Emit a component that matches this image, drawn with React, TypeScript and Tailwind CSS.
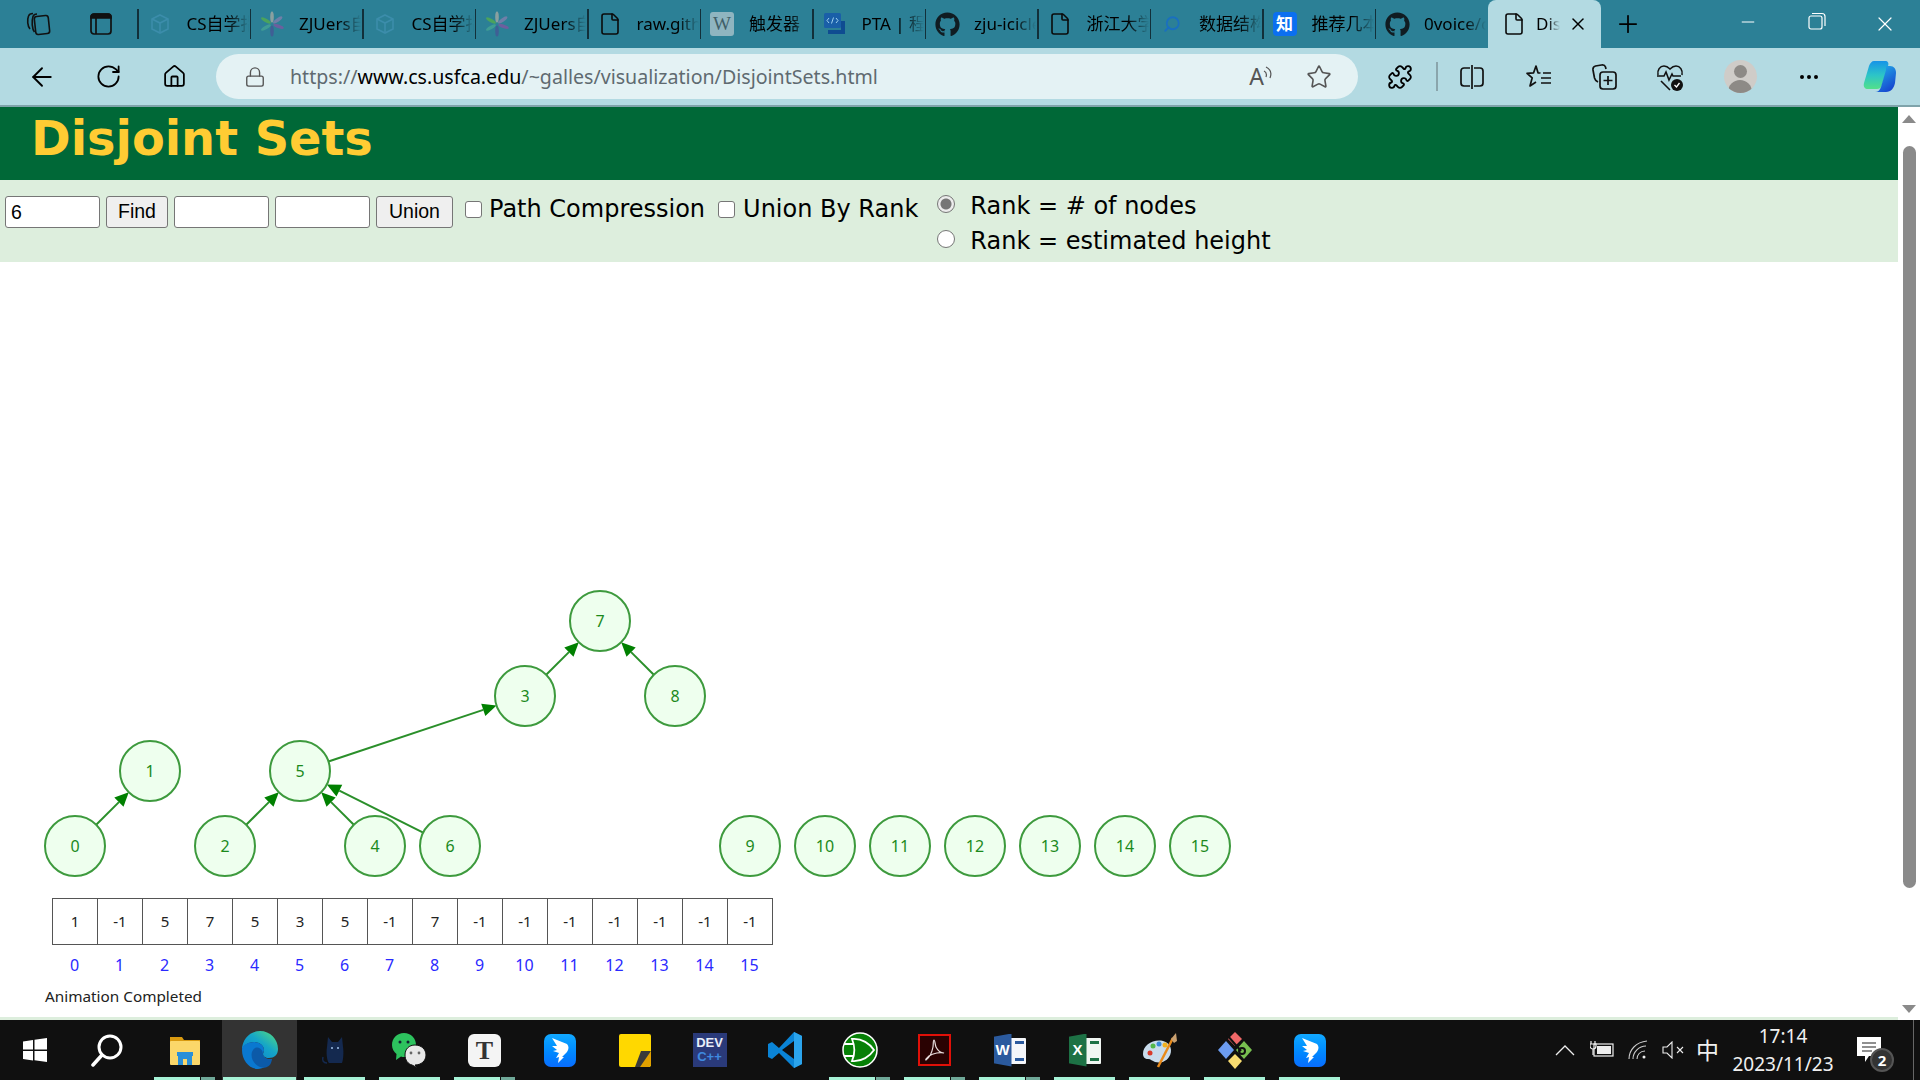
import type { ReactNode } from "react";
import {
  ArrowLeft,
  File,
  Home,
  Lock,
  Minus,
  MoreHorizontal,
  Plus,
  Puzzle,
  RotateCw,
  Search,
  Star,
  X,
} from "lucide-react";
import { FaGithub } from "react-icons/fa";

const Cube = () => (
  <svg width="24" height="24" viewBox="0 0 24 24" fill="none" stroke="#3c8dab" strokeWidth="1.6">
    <path d="M12 3l8 4v10l-8 4-8-4V7z" />
    <path d="M4 7l8 4 8-4M12 11v10" />
  </svg>
);

const Flower = () => (
  <svg width="26" height="26" viewBox="0 0 26 26">
    {[
      [0, "#8aa0a0"],
      [55, "#6f7fa8"],
      [110, "#6c5f9e"],
      [180, "#3f5f95"],
      [240, "#3f9c94"],
      [300, "#4ba35c"],
    ].map(([angle, color]) => (
      <ellipse
        key={angle}
        cx="13"
        cy="6"
        rx="1.8"
        ry="5.5"
        fill={color as string}
        transform={`rotate(${angle} 13 13)`}
      />
    ))}
  </svg>
);

const PtaIcon = () => (
  <svg width="24" height="24" viewBox="0 0 24 24">
    <rect x="1" y="1" width="17" height="15" rx="1.5" fill="#1a5fa8" />
    <path d="M5 22h17V9h-4v9H5z" fill="#0f4c91" />
    <path d="M6 6L4 8.5 6 11M13 6l2 2.5-2 2.5M10.5 5.5l-2 6" stroke="#9fd0ef" strokeWidth="1" fill="none" />
  </svg>
);

const tabs: { label: string; icon: ReactNode }[] = [
  { label: "CS自学指南", icon: <Cube /> },
  { label: "ZJUers自学", icon: <Flower /> },
  { label: "CS自学指南", icon: <Cube /> },
  { label: "ZJUers自学", icon: <Flower /> },
  { label: "raw.githubuser", icon: <File size={24} strokeWidth={1.6} color="#0b0b0b" /> },
  {
    label: "触发器",
    icon: (
      <span className="flex h-6 w-6 items-center justify-center rounded-[3px] bg-[#8fb5c0] font-['Liberation_Serif',serif] text-[19px] text-[#3f5f68]">
        W
      </span>
    ),
  },
  { label: "PTA | 程序", icon: <PtaIcon /> },
  { label: "zju-icicles", icon: <FaGithub size={25} color="#101c22" /> },
  { label: "浙江大学", icon: <File size={24} strokeWidth={1.6} color="#0b0b0b" /> },
  { label: "数据结构", icon: <Search size={18} strokeWidth={2.4} color="#1a6fc0" className="-scale-x-100" /> },
  {
    label: "推荐几本",
    icon: (
      <span className="flex h-6 w-6 items-center justify-center rounded-[4px] bg-[#0b6ff0] text-[17px] font-bold text-white">
        知
      </span>
    ),
  },
  { label: "0voice/cpp", icon: <FaGithub size={25} color="#101c22" /> },
];

const CollectionsIcon = () => (
  <svg width="26" height="26" viewBox="0 0 26 26" fill="none" stroke="#111" strokeWidth="1.6">
    <rect x="10" y="5" width="14" height="18" rx="2.5" transform="rotate(-6 17 14)" />
    <path d="M9.5 21C7 18 6.5 10 8 5.5c.5-1.5 2-2.5 4-2.5" />
    <path d="M5 18C2.5 15 2 9 3.5 5 4 3.5 5.5 2.5 8 2.5" />
  </svg>
);

const TabActionsIcon = () => (
  <svg width="24" height="26" viewBox="0 0 24 26" fill="none" stroke="#111" strokeWidth="1.7">
    <rect x="2" y="3" width="20" height="20" rx="3" />
    <path d="M2 7V6a3 3 0 013-3h14a3 3 0 013 3v1z" fill="#111" />
    <path d="M7 7v16" />
  </svg>
);

const ReadAloud = () => (
  <span className="flex items-start text-[#555]">
    <span className="text-[23px] leading-none">A</span>
    <svg width="10" height="16" viewBox="0 0 10 16" fill="none" stroke="#555" strokeWidth="1.2" className="-ml-[1px]">
      <path d="M1 6c2 1 3 3 2 6M3 2c4 2 6 6 4 11" />
    </svg>
  </span>
);

const SplitIcon = () => (
  <svg width="26" height="26" viewBox="0 0 26 26" fill="none" stroke="#111" strokeWidth="1.7">
    <path d="M11 4H5a3 3 0 00-3 3v12a3 3 0 003 3h6M15 4h6a3 3 0 013 3v12a3 3 0 01-3 3h-6" />
    <path d="M13 1v24" />
  </svg>
);

const FavoritesIcon = () => (
  <svg width="26" height="26" viewBox="0 0 26 26" fill="none" stroke="#111" strokeWidth="1.7" strokeLinejoin="round">
    <path d="M14.500 9l-2.500-.2L10 2 7.600 8.800 1 9.300l5.200 4.500L4 22l6-4" />
    <path d="M17 9h8M15 14h10M15 19h10" />
  </svg>
);

const AddCollectionIcon = () => (
  <svg width="28" height="28" viewBox="0 0 28 28" fill="none" stroke="#111" strokeWidth="1.7">
    <path d="M7 19c-2-1-3-2-3.500-4L2 7c-.3-2 .7-3.500 2.500-4l6-1c2-.3 3.500.5 4 2l.5 2" />
    <rect x="9" y="9" width="16" height="17" rx="3" />
    <path d="M17 13v9M12.500 17.500h9" />
  </svg>
);

const HealthIcon = () => (
  <svg width="30" height="30" viewBox="0 0 30 30" fill="none" stroke="#111" strokeWidth="1.6">
    <path d="M2 13c-1-5 2-9 6-9 3 0 5 2 6 3 1-1 3-3 6-3 4 0 7 4 6 9" />
    <path d="M1 14h7l2-4 3 8 3-6 1 2h8" />
    <path d="M5 19l9 9" />
    <circle cx="21" cy="23" r="6" fill="#111" stroke="none" />
    <path d="M18.500 23l2 2 3-4" stroke="#fff" strokeWidth="1.3" />
  </svg>
);

const CopilotIcon = () => (
  <svg width="36" height="38" viewBox="0 0 36 36">
    <defs>
      <linearGradient id="copA" x1="0" y1="0" x2="0" y2="1">
        <stop offset="0" stopColor="#1693e8" />
        <stop offset="0.5" stopColor="#2cc4c8" />
        <stop offset="1" stopColor="#52e08a" />
      </linearGradient>
      <linearGradient id="copB" x1="0" y1="0" x2="0.6" y2="1">
        <stop offset="0" stopColor="#22b8ea" />
        <stop offset="1" stopColor="#1748d0" />
      </linearGradient>
    </defs>
    <path d="M12 2h11c3 0 4 2 3 5l-6 19c-1 3-3 4-5 4H6c-3 0-5-2-4-6l5-17c1-3 3-5 5-5z" fill="url(#copA)" />
    <path d="M24 7h4c4 0 6 3 6 7l-1 10c-1 5-4 9-9 9H13c3 0 5-2 6-5l5-17z" fill="url(#copB)" />
  </svg>
);

const WindowsLogo = () => (
  <svg width="26" height="26" viewBox="0 0 26 26" fill="#fff">
    <path d="M1 4.500l10-1.500v9.500H1zM12.500 2.700L25 1v11.500H12.500zM1 14h10v9.500L1 22zM12.500 14H25v11l-12.500-1.700z" />
  </svg>
);

const SearchLogo = () => (
  <svg width="34" height="34" viewBox="0 0 34 34" fill="none" stroke="#fff" className="-translate-x-[3px]">
    <circle cx="20" cy="14" r="11" strokeWidth="3" />
    <path d="M12 22L3 32" strokeWidth="3.500" strokeLinecap="round" />
  </svg>
);

const ExplorerLogo = () => (
  <svg width="34" height="30" viewBox="0 0 34 30">
    <path d="M2 2h12l2 3h16v6H2z" fill="#d99a10" />
    <rect x="2" y="6" width="30" height="24" rx="1" fill="#fbd76a" />
    <path d="M9 17h16v4h-1v9h-5v-6h-4v6h-5v-9H9z" fill="#2a8fd8" />
  </svg>
);

const EdgeLogo = () => (
  <svg width="38" height="40" viewBox="0 0 38 40">
    <defs>
      <linearGradient id="edgeTop" x1="0" y1="1" x2="1" y2="0">
        <stop offset="0" stopColor="#0b7fd0" />
        <stop offset="0.55" stopColor="#15a5c8" />
        <stop offset="1" stopColor="#57e07c" />
      </linearGradient>
    </defs>
    <path d="M19 1c10 0 18 8 18 18 0 6-4 9-9 9-4 0-6-2-6-4 0-1 1-2 1-4 0-4-4-8-10-8C7 12 2 16 1 20 1 9 9 1 19 1z" fill="url(#edgeTop)" />
    <path d="M1 20c0-5 6-8 12-8 5 0 10 3 10 8 0 1-1 3-1 4 0 3 3 6 9 5-3 6-9 10-14 10C8 39 1 30 1 20z" fill="#0a78d0" />
    <path d="M14 18c-5 3-5 13 3 18 3 2 7 2 9 1 2-1 4-2 5-8-6 1-9-2-9-5 0-3-3-8-8-6z" fill="#0c5aa8" />
  </svg>
);

const CatLogo = () => (
  <svg width="30" height="30" viewBox="0 0 30 30">
    <path d="M8 2l4 5h6l4-5 1 10c1 6 0 14-1 16H9C7 26 6 18 7 12z" fill="#14294f" />
    <path d="M7 28C3 28 2 25 3 22" fill="none" stroke="#14294f" strokeWidth="1.500" />
    <circle cx="12" cy="13" r="1" fill="#9fc0e8" />
    <circle cx="18" cy="13" r="1" fill="#9fc0e8" />
  </svg>
);

const WechatLogo = () => (
  <svg width="38" height="36" viewBox="0 0 38 36">
    <path d="M1 13C1 6 6 1 13 1s12 5 12 12-5 12-12 12c-1 0-2 0-3-.5L5 28l.5-6C3 20 1 17 1 13z" fill="#2dc25e" />
    <circle cx="9" cy="10" r="1.500" fill="#123" />
    <circle cx="17" cy="10" r="1.500" fill="#123" />
    <path d="M14 23c0-6 4-10 10-10s11 4 11 10-5 10-11 10l3 3-6-3c-4-1-7-5-7-10z" fill="#e8e8e8" stroke="#101010" strokeWidth="1" />
    <circle cx="20" cy="21" r="1.400" fill="#666" />
    <circle cx="28" cy="21" r="1.400" fill="#666" />
  </svg>
);

const DingLogo = () => (
  <span className="flex h-[33px] w-[32px] items-center justify-center rounded-[7px] bg-gradient-to-b from-[#12a8ff] to-[#0a6cff]">
    <svg width="22" height="26" viewBox="0 0 22 26" fill="#fff">
      <path d="M3 1l15 6c2 2 2 5 0 8l-5 5 2 0-6 6 1-6-3 1 3-5-6-2 4-1-5-4 5 0z" />
    </svg>
  </span>
);

const StickyLogo = () => (
  <span className="relative block h-[33px] w-[32px] rounded-[2px] bg-[#ffd800]">
    <svg width="16" height="16" viewBox="0 0 16 16" className="absolute bottom-0 right-0">
      <path d="M16 0H6L0 16h10z" fill="#3a3a3a" />
      <path d="M16 0v14l-2 2H5z" fill="#e2a100" />
    </svg>
  </span>
);

const VscodeLogo = () => (
  <svg width="36" height="38" viewBox="0 0 36 38">
    <path d="M27 1l8 4v28l-8 4-15-15-7 6-4-2V13l4-2 7 6z" fill="#0a84d6" />
    <path d="M27 10L15 19l12 9z" fill="#101010" />
    <path d="M27 1l8 4v28l-8 4z" fill="#2ba4ec" />
  </svg>
);

const LogisimLogo = () => (
  <svg width="36" height="36" viewBox="0 0 36 36">
    <circle cx="18" cy="18" r="17" fill="#068006" stroke="#fff" strokeWidth="1.500" />
    <path d="M10 7c10-1 18 5 22 11-4 6-12 12-22 11 3-7 3-15 0-22zM2 12h10M2 24h10" fill="none" stroke="#fff" strokeWidth="1.800" />
  </svg>
);

const AcrobatLogo = () => (
  <span className="flex h-[32px] w-[33px] items-center justify-center border-2 border-[#e01008] bg-[#2a0202]">
    <svg width="22" height="24" viewBox="0 0 22 24" fill="none" stroke="#e8dcdc" strokeWidth="1.200">
      <path d="M2 22c3-2 6-8 7-13 .5-3 0-7 1-7s1 5 2 7c2 4 5 6 8 6-3-1-11 0-15 3-2 2-4 4-3 4z" />
    </svg>
  </span>
);

const OfficeLogo = ({ letter, dark, light, rule }: { letter: string; dark: string; light: string; rule: string }) => (
  <span className="relative block h-[33px] w-[32px]">
    <span className={`absolute right-0 top-[4px] h-[26px] w-[20px] rounded-[1px] ${light}`}>
      <span className={`ml-[9px] mt-[3px] block h-[20px] w-[9px] border-y-[3px] ${rule}`} />
    </span>
    <span
      className={`absolute left-0 top-0 flex h-[33px] w-[18px] items-center justify-center font-['Liberation_Sans',sans-serif] text-[15px] font-bold text-white [clip-path:polygon(0_10%,100%_0,100%_100%,0_90%)] ${dark}`}
    >
      {letter}
    </span>
  </span>
);

const PaintLogo = () => (
  <svg width="38" height="36" viewBox="0 0 38 36">
    <path d="M2 22C2 13 12 7 22 9c8 2 10 10 6 16-4 6-10 6-14 5-3-1-4-3-7-3-3 0-5-2-5-5z" fill="#c9dcec" />
    <circle cx="9" cy="21" r="2.500" fill="#d83a2a" />
    <circle cx="12" cy="14" r="2.500" fill="#54b84a" />
    <circle cx="18" cy="12" r="2.500" fill="#3a8ad8" />
    <circle cx="24" cy="13" r="2.500" fill="#f0b020" />
    <path d="M32 6L17 35" stroke="#e88a1a" strokeWidth="2.500" />
    <path d="M30 7l5-6 1 8-3 2z" fill="#c9a070" />
  </svg>
);

const GitLogo = () => (
  <svg width="36" height="38" viewBox="0 0 36 38">
    <path d="M18 9l-9 9 9 9 9-9z" fill="#101010" />
    <path d="M9 10l-8 9 8 9 8-9z" fill="#6c9cf0" />
    <path d="M27 10l-8 9 8 9 8-9z" fill="#78c050" />
    <path d="M18 1l-7 7 7 7 7-7z" fill="#f06868" />
    <path d="M18 23l-7 7 7 8 7-8z" fill="#f8dc70" />
    <path d="M10 4l14 16" stroke="#101010" strokeWidth="2" />
    <circle cx="25" cy="20" r="3" fill="none" stroke="#101010" strokeWidth="2" />
  </svg>
);

type TaskItem = { icon: ReactNode; bar?: boolean; stacked?: boolean; active?: boolean };

const taskItems: TaskItem[] = [
  { icon: <WindowsLogo /> },
  { icon: <SearchLogo /> },
  { icon: <ExplorerLogo />, bar: true, stacked: true },
  { icon: <EdgeLogo />, bar: true, active: true },
  { icon: <CatLogo />, bar: true },
  { icon: <WechatLogo />, bar: true },
  {
    icon: (
      <span className="flex h-[33px] w-[33px] items-center justify-center rounded-[6px] bg-[#f4f4f4] font-['Liberation_Serif',serif] text-[26px] font-bold text-[#333]">
        T
      </span>
    ),
    bar: true,
    stacked: true,
  },
  { icon: <DingLogo /> },
  { icon: <StickyLogo /> },
  {
    icon: (
      <span className="flex h-[34px] w-[34px] flex-col items-center justify-center bg-[#2a3a7a] font-['Liberation_Sans',sans-serif] text-[13px] font-bold leading-[14px]">
        <span className="text-[#e8eef8]">DEV</span>
        <span className="text-[#3f8ae0]">C++</span>
      </span>
    ),
  },
  { icon: <VscodeLogo /> },
  { icon: <LogisimLogo />, bar: true, stacked: true },
  { icon: <AcrobatLogo />, bar: true, stacked: true },
  {
    icon: <OfficeLogo letter="W" dark="bg-[#2b5a9e]" light="bg-[#f4f6fa]" rule="border-[#2b5a9e]" />,
    bar: true,
    stacked: true,
  },
  {
    icon: <OfficeLogo letter="X" dark="bg-[#1d7145]" light="bg-[#f0f6f2]" rule="border-[#1d7145]" />,
    bar: true,
  },
  { icon: <PaintLogo />, bar: true },
  { icon: <GitLogo />, bar: true },
  { icon: <DingLogo />, bar: true },
];

const nodes: [number, number, number][] = [
  [0, 75, 846],
  [1, 150, 771],
  [2, 225, 846],
  [3, 525, 696],
  [4, 375, 846],
  [5, 300, 771],
  [6, 450, 846],
  [7, 600, 621],
  [8, 675, 696],
  [9, 750, 846],
  [10, 825, 846],
  [11, 900, 846],
  [12, 975, 846],
  [13, 1050, 846],
  [14, 1125, 846],
  [15, 1200, 846],
];

const parents = [1, -1, 5, 7, 5, 3, 5, -1, 7, -1, -1, -1, -1, -1, -1, -1];

const Edge = ({ from, to }: { from: number; to: number }) => {
  const [, x1, y1] = nodes[from];
  const [, x2, y2] = nodes[to];
  const len = Math.hypot(x2 - x1, y2 - y1);
  const ux = (x2 - x1) / len;
  const uy = (y2 - y1) / len;
  const tipX = x2 - ux * 30;
  const tipY = y2 - uy * 30;
  const baseX = tipX - ux * 14;
  const baseY = tipY - uy * 14;
  return (
    <g>
      <line x1={x1 + ux * 30} y1={y1 + uy * 30} x2={baseX} y2={baseY} stroke="#2a8f2a" strokeWidth="2" />
      <polygon
        fill="#008000"
        points={`${tipX},${tipY} ${baseX - uy * 6.5},${baseY + ux * 6.5} ${baseX + uy * 6.5},${baseY - ux * 6.5}`}
      />
    </g>
  );
};

const Diagram = () => (
  <svg width="1898" height="628" viewBox="0 262 1898 628" className="block">
    {parents.map((parent, i) => (parent >= 0 ? <Edge key={i} from={i} to={parent} /> : null))}
    {nodes.map(([id, x, y]) => (
      <g key={id}>
        <circle cx={x} cy={y} r="30" fill="#eeffee" stroke="#3d9a3d" strokeWidth="2" />
        <text x={x} y={y} textAnchor="middle" dominantBaseline="central" fill="#1c8a1c" fontSize="16">
          {id}
        </text>
      </g>
    ))}
  </svg>
);

export default function App() {
  return (
    <div className="flex h-[1080px] w-[1920px] flex-col overflow-hidden bg-white font-['Noto_Sans','Noto_Sans_CJK_SC',sans-serif] text-black">
      {/* tab strip */}
      <div className="flex h-12 items-center bg-[#2c8096] pl-[6px]">
        <div className="flex w-[63px] justify-center">
          <CollectionsIcon />
        </div>
        <div className="flex w-[63px] justify-center">
          <TabActionsIcon />
        </div>
        <div className="ml-[5px] flex">
          {tabs.map((tab, i) => (
            <div key={i} className="flex h-12 w-[112.5px] items-center">
              <span className="h-[30px] w-[1.5px] shrink-0 bg-[#12303a]" />
              <span className="ml-[8px] flex w-[26px] shrink-0 justify-center">{tab.icon}</span>
              <span className="ml-[14px] w-[62px] overflow-hidden whitespace-nowrap text-[17px] [mask-image:linear-gradient(to_right,black_65%,transparent)]">
                {tab.label}
              </span>
            </div>
          ))}
        </div>
        <div className="ml-[1px] flex h-12 w-[113px] items-center rounded-t-[8px] bg-[#b3dae2]">
          <span className="ml-[13px] flex w-[26px] shrink-0 justify-center">
            <File size={24} strokeWidth={1.6} color="#0b0b0b" />
          </span>
          <span className="ml-[9px] w-[24px] overflow-hidden whitespace-nowrap text-[17px] [mask-image:linear-gradient(to_right,black_50%,transparent)]">
            Disjoint
          </span>
          <X size={20} strokeWidth={1.8} className="ml-[8px]" />
        </div>
        <div className="ml-[7px] flex w-[40px] justify-center">
          <Plus size={28} strokeWidth={1.5} />
        </div>
        <div className="ml-auto flex text-white">
          <div className="flex w-[69px] justify-center">
            <Minus size={20} strokeWidth={1.2} />
          </div>
          <div className="flex w-[69px] justify-center">
            <svg width="18" height="18" viewBox="0 0 18 18" fill="none" stroke="#fff" strokeWidth="1.200">
              <rect x="1" y="4" width="13" height="13" rx="2" />
              <path d="M4 1.500h10a3 3 0 013 3V14" />
            </svg>
          </div>
          <div className="flex w-[69px] justify-center pr-[1px]">
            <X size={24} strokeWidth={1.2} />
          </div>
        </div>
      </div>

      {/* toolbar */}
      <div className="flex h-[59px] items-center border-b-2 border-[#7fa3aa] bg-[#b3dae2] pl-[9px]">
        <div className="flex w-[66px] justify-center">
          <ArrowLeft size={30} strokeWidth={1.5} />
        </div>
        <div className="flex w-[66px] justify-center">
          <RotateCw size={27} strokeWidth={1.6} />
        </div>
        <div className="flex w-[66px] justify-center">
          <Home size={25} strokeWidth={1.7} />
        </div>
        <div className="ml-[9px] flex h-[45px] w-[1142px] items-center rounded-full bg-[#e4f2f4]">
          <Lock size={22} strokeWidth={1.5} color="#555" className="ml-[28px]" />
          <span className="ml-[24px] whitespace-nowrap text-[19.6px] text-[#5f6a70]">
            https://<span className="text-black">www.cs.usfca.edu</span>/~galles/visualization/DisjointSets.html
          </span>
          <div className="ml-auto flex items-center gap-[33px] pr-[26px]">
            <ReadAloud />
            <Star size={26} strokeWidth={1.5} color="#555" />
          </div>
        </div>
        <div className="ml-[9px] flex w-[66px] justify-center">
          <Puzzle size={26} strokeWidth={1.7} />
        </div>
        <span className="ml-[3px] h-[29px] w-[2px] bg-[#8aa5ac]" />
        <div className="ml-[1px] flex w-[66px] justify-center">
          <SplitIcon />
        </div>
        <div className="ml-[1px] flex w-[66px] justify-center">
          <FavoritesIcon />
        </div>
        <div className="flex w-[66px] justify-center">
          <AddCollectionIcon />
        </div>
        <div className="flex w-[66px] justify-center">
          <HealthIcon />
        </div>
        <div className="ml-[3px] flex w-[66px] justify-center">
          <span className="flex h-[33px] w-[33px] flex-col items-center overflow-hidden rounded-full bg-[#cfccc8]">
            <span className="mt-[5px] h-[15px] w-[13px] rounded-full bg-[#8d8a86]" />
            <span className="mt-[2px] h-[14px] w-[24px] rounded-t-full bg-[#8d8a86]" />
          </span>
        </div>
        <div className="ml-[3px] flex w-[66px] justify-center">
          <MoreHorizontal size={24} strokeWidth={2} />
        </div>
        <div className="ml-[5px] flex w-[66px] justify-center">
          <CopilotIcon />
        </div>
      </div>

      {/* page */}
      <div className="flex h-[913px]">
        <div className="flex w-[1898px] flex-col">
          <div className="h-[73px] bg-[#006837] pl-[31px] font-['DejaVu_Sans',sans-serif] text-[47.8px] font-bold leading-[64px] text-[#ffcc33]">
            Disjoint Sets
          </div>
          <div className="flex h-[82px] items-start bg-[#ddeedd] pl-[5px] pt-[16px] font-['DejaVu_Sans',sans-serif] text-[24px]">
            <input
              readOnly
              value="6"
              className="h-[32px] w-[95px] rounded-[3px] border border-[#767676] bg-white px-[5px] font-['Liberation_Sans',sans-serif] text-[19.5px]"
            />
            <button className="ml-[6px] h-[32px] w-[62px] rounded-[3px] border border-[#767676] bg-[#efefef] font-['Liberation_Sans',sans-serif] text-[19.5px]">
              Find
            </button>
            <input
              readOnly
              className="ml-[6px] h-[32px] w-[95px] rounded-[3px] border border-[#767676] bg-white"
            />
            <input
              readOnly
              className="ml-[6px] h-[32px] w-[95px] rounded-[3px] border border-[#767676] bg-white"
            />
            <button className="ml-[6px] h-[32px] w-[77px] rounded-[3px] border border-[#767676] bg-[#efefef] font-['Liberation_Sans',sans-serif] text-[19.5px]">
              Union
            </button>
            <label className="ml-[12px] flex h-[26px] items-center">
              <input
                type="checkbox"
                className="h-[17px] w-[17px] appearance-none rounded-[3px] border border-[#767676] bg-white"
              />
              <span className="ml-[7px] leading-[26px]">Path Compression</span>
            </label>
            <label className="ml-[13px] flex h-[26px] items-center">
              <input
                type="checkbox"
                className="h-[17px] w-[17px] appearance-none rounded-[3px] border border-[#767676] bg-white"
              />
              <span className="ml-[8px] leading-[26px]">Union By Rank</span>
            </label>
            <div className="-mt-[8px] ml-[19px] flex flex-col">
              <label className="flex h-[35px] items-center">
                <input
                  type="radio"
                  name="rank"
                  defaultChecked
                  disabled
                  className="mb-[4px] h-[18px] w-[18px] appearance-none rounded-full border border-[#767676] bg-[radial-gradient(circle,#767676_0,#767676_5px,#ececec_6px)]"
                />
                <span className="ml-[15px]">Rank = # of nodes</span>
              </label>
              <label className="flex h-[35px] items-center">
                <input
                  type="radio"
                  name="rank"
                  className="mb-[4px] h-[18px] w-[18px] appearance-none rounded-full border border-[#767676] bg-white"
                />
                <span className="ml-[15px]">Rank = estimated height</span>
              </label>
            </div>
          </div>
          <div className="flex-1">
            <Diagram />
            <div className="ml-[52px] mt-[8px] flex w-[721px] border border-[#555]">
              {parents.map((parent, i) => (
                <div
                  key={i}
                  className="flex h-[45px] w-[45px] items-center justify-center border-l border-[#555] text-[15px] text-[#222] first:w-[44px] first:border-l-0"
                >
                  {parent}
                </div>
              ))}
            </div>
            <div className="ml-[52px] mt-[10px] flex w-[721px]">
              {parents.map((_, i) => (
                <div key={i} className="w-[45px] text-center text-[16px] leading-[20px] text-[#2a2aff]">
                  {i}
                </div>
              ))}
            </div>
            <div className="ml-[45px] mt-[11px] text-[15.3px] leading-[20px] text-[#222]">Animation Completed</div>
          </div>
          <div className="h-[3px] bg-[#ddeedd]" />
        </div>
        {/* scrollbar */}
        <div className="flex w-[22px] flex-col items-center bg-white pt-[8px]">
          <span className="h-0 w-0 border-x-[7.5px] border-b-[8px] border-x-transparent border-b-[#8a8a8a]" />
          <span className="mt-[23px] h-[742px] w-[13px] rounded-t-full rounded-b-full bg-[#8a8a8a]" />
          <span className="mt-auto mb-[7px] h-0 w-0 border-x-[7.5px] border-t-[8px] border-x-transparent border-t-[#8a8a8a]" />
        </div>
      </div>

      {/* taskbar */}
      <div className="flex h-[60px] items-center bg-[#101010] text-[#f0f0f0]">
        <div className="ml-[-3px] flex">
          {taskItems.map((item, i) => (
            <div
              key={i}
              className={`relative flex h-[60px] w-[75px] items-center justify-center ${item.active ? "bg-[#333333]" : ""}`}
            >
              {item.icon}
              {item.bar && (
                <span className={`absolute bottom-0 flex h-[3px] ${item.active ? "inset-x-[1px]" : "inset-x-[7px]"}`}>
                  <span className="flex-1 bg-[#a6f2d6]" />
                  {item.stacked && <span className="ml-[1px] w-[14px] bg-[#6fa898]" />}
                </span>
              )}
            </div>
          ))}
        </div>
        <div className="ml-auto flex items-center">
          <svg width="20" height="12" viewBox="0 0 20 12" fill="none" stroke="#eee" strokeWidth="1.300">
            <path d="M1 11l9-9 9 9" />
          </svg>
          <svg width="24" height="18" viewBox="0 0 24 18" fill="none" stroke="#eee" strokeWidth="1.200" className="ml-[15px]">
            <rect x="4" y="3" width="19" height="12" />
            <rect x="7" y="5" width="14" height="8" fill="#eee" stroke="none" />
            <path d="M1 0v3M5 0v3M0 3h6v2a3 3 0 01-6 0zM3 8v6" />
          </svg>
          <svg width="20" height="20" viewBox="0 0 20 20" fill="none" stroke="#ccc" strokeWidth="1.100" className="ml-[14px]">
            <path d="M1 19C1 10 8 2 19 1M5 19c0-7 6-13 13-13M9 19c0-4 3-8 8-8" />
            <circle cx="16" cy="17" r="1.500" fill="#eee" stroke="none" />
          </svg>
          <svg width="22" height="18" viewBox="0 0 22 18" fill="none" stroke="#eee" strokeWidth="1.100" className="ml-[14px]">
            <path d="M1 6h4l5-5v16l-5-5H1zM15 6l6 6M21 6l-6 6" />
          </svg>
          <span className="ml-[12px] text-[23px] leading-none">中</span>
          <div className="ml-[11px] flex w-[106px] flex-col items-center text-[19px] leading-[28px]">
            <span>17:14</span>
            <span>2023/11/23</span>
          </div>
          <div className="relative ml-[21px] mr-[32px] h-[24px] w-[24px]">
            <svg width="26" height="26" viewBox="0 0 26 26" className="absolute -top-[1px] left-0">
              <path d="M0 0h24v19H12l-4 6v-6H0z" fill="#fff" />
              <path d="M5 6h14M5 10h14M5 14h10" stroke="#222" strokeWidth="1.200" />
            </svg>
            <span className="absolute -right-[13px] top-[10px] flex h-[24px] w-[24px] items-center justify-center rounded-full border-2 border-[#555] bg-[#333] text-[15px] font-bold leading-none text-white">
              2
            </span>
          </div>
          <span className="h-[60px] w-[1px] bg-[#666]" />
          <span className="w-[6px]" />
        </div>
      </div>
    </div>
  );
}
